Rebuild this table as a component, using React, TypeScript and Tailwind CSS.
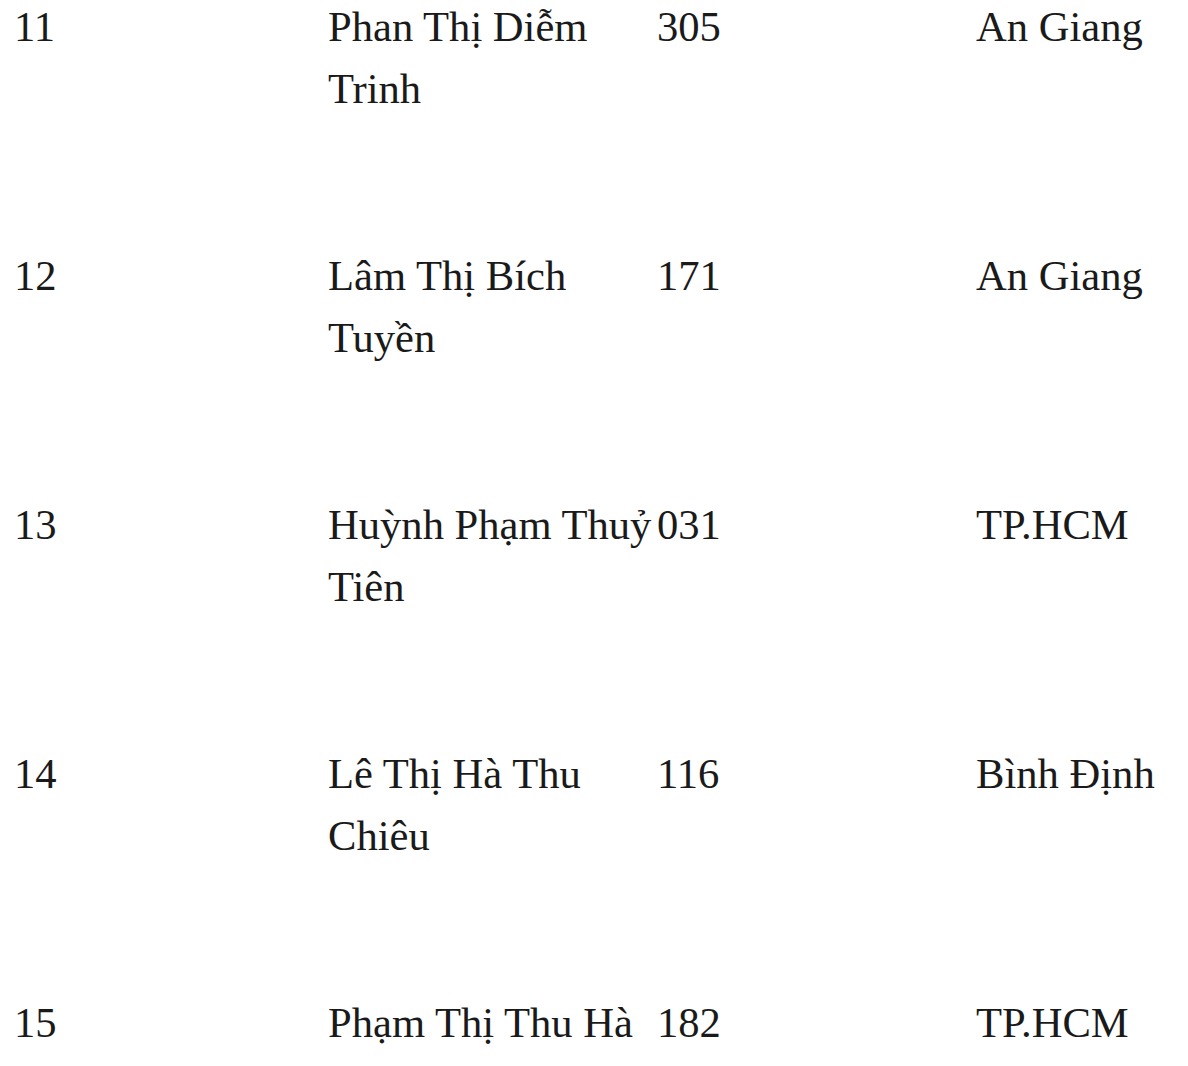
const rows = [
  { no: "11", name: "Phan Thị Diễm Trinh", code: "305", place: "An Giang" },
  { no: "12", name: "Lâm Thị Bích Tuyền", code: "171", place: "An Giang" },
  { no: "13", name: "Huỳnh Phạm Thuỷ Tiên", code: "031", place: "TP.HCM" },
  { no: "14", name: "Lê Thị Hà Thu Chiêu", code: "116", place: "Bình Định" },
  { no: "15", name: "Phạm Thị Thu Hà", code: "182", place: "TP.HCM" },
];

export default function App() {
  return (
    <div className="bg-white pl-[14px] text-[#1a1a1a] [font-family:'Liberation_Serif','Times_New_Roman',serif] text-[42.6px] leading-[62px]">
      <div className="-mt-[4px]">
        {rows.map((r) => (
          <div
            key={r.no}
            className="grid h-[249px] grid-cols-[314px_329px_319px_1fr] items-start last:h-auto"
          >
            <div>{r.no}</div>
            <div className="pr-1">{r.name}</div>
            <div>{r.code}</div>
            <div>{r.place}</div>
          </div>
        ))}
      </div>
    </div>
  );
}
